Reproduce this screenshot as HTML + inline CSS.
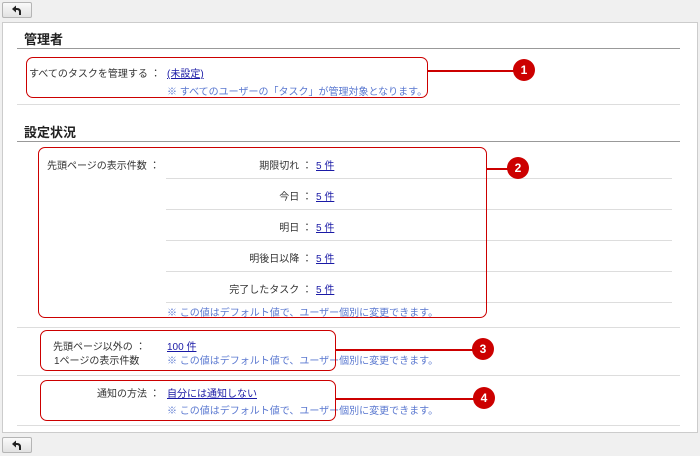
<!DOCTYPE html>
<html><head><meta charset="utf-8"><style>
body{margin:0;width:700px;height:456px;background:#f0f0f0;position:relative;overflow:hidden;font-family:"Liberation Sans","Noto Sans CJK JP",sans-serif;font-size:10px;color:#333}
.a{position:absolute;white-space:nowrap}
.btn{position:absolute;left:2px;width:30px;height:16px;background:linear-gradient(#fafafa,#e2e2e2);border:1px solid #b5b5b5;border-radius:2px;box-sizing:border-box}
.panel{position:absolute;left:2px;top:22px;width:696px;height:411px;background:#fff;border:1px solid #ccc;box-sizing:border-box}
.h{position:absolute;font-size:13px;font-weight:bold;color:#222}
.hl{position:absolute;left:17px;width:663px;height:1px;background:#999}
.sl{position:absolute;height:1px;background:#ddd}
.box{position:absolute;border:1.5px solid #c00;border-radius:7px;box-sizing:border-box}
.ln{position:absolute;height:1.5px;background:#c00}
.c{position:absolute;width:22px;height:22px;border-radius:50%;background:#c00;color:#fff;font-size:12px;text-align:center;line-height:22px;font-weight:bold}
a{color:#1a1aa6;text-decoration:underline}
.n{color:#5a78d0}
.r{text-align:right}
</style></head><body>
<div class="btn" style="top:2px"><svg width="28" height="14" viewBox="0 0 28 14"><path d="M13 2.5 L9 6 L13 9.5 Z" fill="#222"/><path d="M12 6 H14 Q17 6 17 9 V12" stroke="#222" stroke-width="2" fill="none"/></svg></div>
<div class="panel"></div>
<div class="h" style="left:24px;top:29px">管理者</div>
<div class="hl" style="top:48px"></div>
<div class="a" style="left:29px;top:65px">すべてのタスクを管理する ：</div>
<div class="a" style="left:167px;top:65px"><a>(未設定)</a></div>
<div class="a n" style="left:167px;top:83px">※ すべてのユーザーの「タスク」が管理対象となります。</div>
<div class="box" style="left:26px;top:57px;width:402px;height:41px"></div>
<div class="ln" style="left:428px;top:70px;width:90px"></div>
<div class="c" style="left:513px;top:59px">1</div>
<div class="sl" style="left:17px;top:104px;width:663px"></div>
<div class="h" style="left:24px;top:122px">設定状況</div>
<div class="hl" style="top:141px"></div>
<div class="a" style="left:47px;top:157px">先頭ページの表示件数 ：</div>
<div class="a r" style="left:200px;width:112px;top:157px">期限切れ ：</div>
<div class="a r" style="left:200px;width:112px;top:188px">今日 ：</div>
<div class="a r" style="left:200px;width:112px;top:219px">明日 ：</div>
<div class="a r" style="left:200px;width:112px;top:250px">明後日以降 ：</div>
<div class="a r" style="left:200px;width:112px;top:281px">完了したタスク ：</div>
<div class="a" style="left:316px;top:157px"><a>5 件</a></div>
<div class="a" style="left:316px;top:188px"><a>5 件</a></div>
<div class="a" style="left:316px;top:219px"><a>5 件</a></div>
<div class="a" style="left:316px;top:250px"><a>5 件</a></div>
<div class="a" style="left:316px;top:281px"><a>5 件</a></div>
<div class="sl" style="left:166px;top:178px;width:506px"></div>
<div class="sl" style="left:166px;top:209px;width:506px"></div>
<div class="sl" style="left:166px;top:240px;width:506px"></div>
<div class="sl" style="left:166px;top:271px;width:506px"></div>
<div class="sl" style="left:166px;top:302px;width:506px"></div>
<div class="a n" style="left:167px;top:304px">※ この値はデフォルト値で、ユーザー個別に変更できます。</div>
<div class="box" style="left:38px;top:147px;width:449px;height:171px"></div>
<div class="ln" style="left:487px;top:168px;width:26px"></div>
<div class="c" style="left:507px;top:157px">2</div>
<div class="sl" style="left:17px;top:327px;width:663px"></div>
<div class="a" style="left:53px;top:338px">先頭ページ以外の ：</div>
<div class="a" style="left:54px;top:352px">1ページの表示件数</div>
<div class="a" style="left:167px;top:338px"><a>100 件</a></div>
<div class="a n" style="left:167px;top:352px">※ この値はデフォルト値で、ユーザー個別に変更できます。</div>
<div class="box" style="left:40px;top:330px;width:296px;height:41px"></div>
<div class="ln" style="left:336px;top:349px;width:140px"></div>
<div class="c" style="left:472px;top:338px">3</div>
<div class="sl" style="left:17px;top:375px;width:663px"></div>
<div class="a" style="left:97px;top:385px">通知の方法 ：</div>
<div class="a" style="left:167px;top:385px"><a>自分には通知しない</a></div>
<div class="a n" style="left:167px;top:402px">※ この値はデフォルト値で、ユーザー個別に変更できます。</div>
<div class="box" style="left:40px;top:380px;width:296px;height:41px"></div>
<div class="ln" style="left:336px;top:398px;width:140px"></div>
<div class="c" style="left:473px;top:387px">4</div>
<div class="sl" style="left:17px;top:425px;width:663px"></div>
<div class="btn" style="top:437px"><svg width="28" height="14" viewBox="0 0 28 14"><path d="M13 2.5 L9 6 L13 9.5 Z" fill="#222"/><path d="M12 6 H14 Q17 6 17 9 V12" stroke="#222" stroke-width="2" fill="none"/></svg></div>
</body></html>
